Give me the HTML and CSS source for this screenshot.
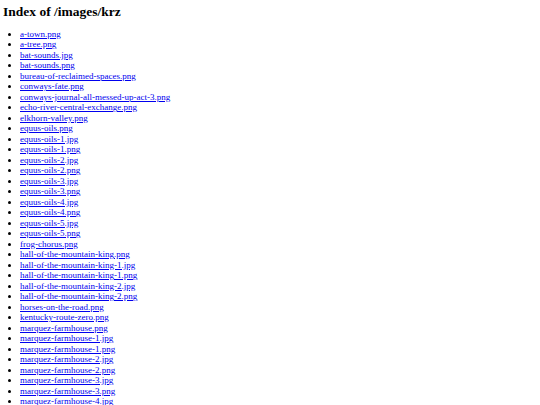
FILE: index.html
```html
<!DOCTYPE html>
<html>
<head>
<meta charset="utf-8">
<title>Index of /images/krz</title>
<link rel="stylesheet" href="styles.css">
</head>
<body class="page">
<h1 class="title">Index of /images/krz</h1>
<ul class="listing">
<li><a href="a-town.png">a-town.png</a></li>
<li><a href="a-tree.png">a-tree.png</a></li>
<li><a href="bat-sounds.jpg">bat-sounds.jpg</a></li>
<li><a href="bat-sounds.png">bat-sounds.png</a></li>
<li><a href="bureau-of-reclaimed-spaces.png">bureau-of-reclaimed-spaces.png</a></li>
<li><a href="conways-fate.png">conways-fate.png</a></li>
<li><a href="conways-journal-all-messed-up-act-3.png">conways-journal-all-messed-up-act-3.png</a></li>
<li><a href="echo-river-central-exchange.png">echo-river-central-exchange.png</a></li>
<li><a href="elkhorn-valley.png">elkhorn-valley.png</a></li>
<li><a href="equus-oils.png">equus-oils.png</a></li>
<li><a href="equus-oils-1.jpg">equus-oils-1.jpg</a></li>
<li><a href="equus-oils-1.png">equus-oils-1.png</a></li>
<li><a href="equus-oils-2.jpg">equus-oils-2.jpg</a></li>
<li><a href="equus-oils-2.png">equus-oils-2.png</a></li>
<li><a href="equus-oils-3.jpg">equus-oils-3.jpg</a></li>
<li><a href="equus-oils-3.png">equus-oils-3.png</a></li>
<li><a href="equus-oils-4.jpg">equus-oils-4.jpg</a></li>
<li><a href="equus-oils-4.png">equus-oils-4.png</a></li>
<li><a href="equus-oils-5.jpg">equus-oils-5.jpg</a></li>
<li><a href="equus-oils-5.png">equus-oils-5.png</a></li>
<li><a href="frog-chorus.png">frog-chorus.png</a></li>
<li><a href="hall-of-the-mountain-king.png">hall-of-the-mountain-king.png</a></li>
<li><a href="hall-of-the-mountain-king-1.jpg">hall-of-the-mountain-king-1.jpg</a></li>
<li><a href="hall-of-the-mountain-king-1.png">hall-of-the-mountain-king-1.png</a></li>
<li><a href="hall-of-the-mountain-king-2.jpg">hall-of-the-mountain-king-2.jpg</a></li>
<li><a href="hall-of-the-mountain-king-2.png">hall-of-the-mountain-king-2.png</a></li>
<li><a href="horses-on-the-road.png">horses-on-the-road.png</a></li>
<li><a href="kentucky-route-zero.png">kentucky-route-zero.png</a></li>
<li><a href="marquez-farmhouse.png">marquez-farmhouse.png</a></li>
<li><a href="marquez-farmhouse-1.jpg">marquez-farmhouse-1.jpg</a></li>
<li><a href="marquez-farmhouse-1.png">marquez-farmhouse-1.png</a></li>
<li><a href="marquez-farmhouse-2.jpg">marquez-farmhouse-2.jpg</a></li>
<li><a href="marquez-farmhouse-2.png">marquez-farmhouse-2.png</a></li>
<li><a href="marquez-farmhouse-3.jpg">marquez-farmhouse-3.jpg</a></li>
<li><a href="marquez-farmhouse-3.png">marquez-farmhouse-3.png</a></li>
<li><a href="marquez-farmhouse-4.jpg">marquez-farmhouse-4.jpg</a></li>
</ul>
</body>
</html>
```

FILE: styles.css
```css
html, body {
  background: #ffffff;
}
.page {
  margin: 3px;
  font-family: "Liberation Serif", "Times New Roman", serif;
  color: #000000;
}
.title {
  font-size: 13.5px;
  line-height: 15px;
  font-weight: bold;
  margin: 0.5px 0 0 0;
}
.listing {
  margin: 10.2px 0 0 0;
  padding-left: 17px;
  font-size: 9px;
  line-height: 10.5px;
}
.listing a {
  color: #0000ee;
}
```
